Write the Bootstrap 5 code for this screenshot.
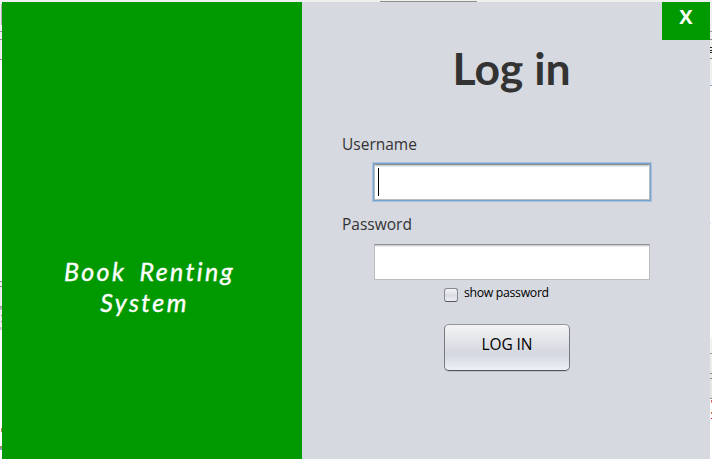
<!DOCTYPE html>
<html lang="en">
<head>
<meta charset="utf-8">
<meta name="viewport" content="width=device-width, initial-scale=1">
<title>Log in</title>
<link href="https://cdn.jsdelivr.net/npm/bootstrap@5.3.0/dist/css/bootstrap.min.css" rel="stylesheet">
<style>
  body { font-family: "Open Sans", "Noto Sans", sans-serif; color: #333; background: #fff; }
  /* window behind the dialog, visible only along its edges */
  .backdrop-window {
    height: 459px; padding: 2px 2px 0;
    background:
      linear-gradient(#8f918a, #8f918a) 380px 1px / 97px 1px,
      linear-gradient(#f0f0f0, #f0f0f0) 0 0 / 712px 2px,
      linear-gradient(#b4b4b4, #b4b4b4) 1px 4px / 1px 21px,
      linear-gradient(#999, #999) 0 31px / 2px 1px,
      linear-gradient(#888, #888) 0 39px / 2px 1px,
      linear-gradient(#888, #888) 0 59px / 2px 1px,
      linear-gradient(#eee, #eee) 0 2px / 2px 58px,
      linear-gradient(#888, #888) 0 281px / 2px 1px,
      linear-gradient(#888, #888) 0 286px / 2px 1px,
      linear-gradient(#999, #ccc) 0 306px / 2px 4px,
      linear-gradient(#787, #787) 1px 315px / 1px 1px,
      linear-gradient(#787, #787) 1px 321px / 1px 1px,
      linear-gradient(#ccc, #ccc) 0 327px / 2px 3px,
      linear-gradient(#eee, #eee) 0 281px / 2px 49px,
      linear-gradient(#a98445, #a98445) 1px 428px / 1px 4px,
      linear-gradient(#a98445, #7aaee0) 0 446px / 2px 4px,
      linear-gradient(#999, #999) 710px 31px / 2px 1px,
      linear-gradient(#888, #888) 710px 39px / 2px 1px,
      linear-gradient(#222, #222) 710px 47px / 2px 1px,
      linear-gradient(#222, #222) 710px 50px / 2px 1px,
      linear-gradient(#222, #222) 710px 52px / 2px 1px,
      linear-gradient(#888, #888) 710px 58px / 2px 1px,
      linear-gradient(#8aa4bd, #8aa4bd) 710px 85px / 2px 1px,
      linear-gradient(#f0f0f0, #f0f0f0) 710px 2px / 2px 83px,
      linear-gradient(#dde6fa, #dde6fa) 710px 222px / 1px 2px,
      linear-gradient(#999, #999) 710px 353px / 2px 1px,
      linear-gradient(#888, #888) 710px 373px / 2px 1px,
      linear-gradient(#888, #888) 710px 378px / 2px 1px,
      linear-gradient(#888, #888) 710px 398px / 2px 1px,
      linear-gradient(#f4f4f4, #e2e2e2) 710px 337px / 2px 62px,
      linear-gradient(#d34b5b, #e99) 711px 400px / 1px 3px,
      linear-gradient(#c96a3a, #c96a3a) 711px 412px / 1px 2px,
      linear-gradient(#c22, #c22) 711px 418px / 2px 1px,
      #fff;
    background-repeat: no-repeat;
  }
  .brand-pane { width: 300px; background: #009900; color: #fff; padding-top: 254px; }
  .brand-name { font: italic 400 25px/31px "Segoe Script", "Bradley Hand", "Lato", cursive; letter-spacing: 2.4px; word-spacing: 5px; -webkit-text-stroke: .4px #fff; }
  .brand-line { display: block; padding-right: 5px; }
  .brand-line + .brand-line { padding-right: 15px; }
  .form-pane { background: #d6d9e0; }
  .close-btn { width: 48px; height: 38px; padding: 0 0 8px; background: #009900; color: #fff; font: 700 20px/30px "Open Sans", sans-serif; }
  .title { font: 700 44.5px/54px "Lato", sans-serif; color: #333; height: 55px; padding: 1px 0 0 11px; }
  .field-label { font-size: 15.5px; line-height: 22px; height: 22px; margin: 38px 0 10px 40px; }
  .field-label.second { margin: 13px 0 9px 40px; }
  .field-box { width: 276px; height: 36px; margin-left: 72px; background: #fff; border: 1px solid #bcbdbf; border-top-color: #8d8e90; box-shadow: inset 0 1px #cfd0d2, inset 0 2px #ececee; }
  .field-box.focused { outline: 1px solid #73a4d1; box-shadow: inset 0 1px #cfd0d2, inset 0 2px #ececee, 0 0 0 2px #a9c1dc; }
  .field-label:first-of-type { margin-bottom: 9px; }
  .caret { width: 1px; height: 28px; background: #000; margin: 3px 0 0 3px; }
  .tick-box { width: 14px; height: 14px; margin-top: 3px; border: 1px solid #85888e; border-bottom-color: #555960; border-radius: 3px; background: linear-gradient(#f5f5f6, #d9dce2 55%, #eef0f5); }
  .show-row { margin: 5px 0 19px 142px; height: 20px; color: #000; }
  .show-text { font-size: 12.3px; line-height: 16px; letter-spacing: -.33px; padding-left: 6px; }
  .login-btn { width: 126px; height: 47px; margin-left: 142px; padding: 0 0 7px; border: 1px solid #8b8e95; border-color: #96989e #777a81 #50545c; border-radius: 5px; background: linear-gradient(#f4f4f5, #d5d8df 62%, #d7dae2 70%, #eff1f8); box-shadow: 0 1px #c0c3ca; color: #000; font-size: 15.5px; line-height: 38px; letter-spacing: -.1px; }
</style>
</head>
<body class="overflow-hidden">
<div class="backdrop-window d-flex">
  <aside class="brand-pane flex-shrink-0 text-center">
    <div class="brand-name"><span class="brand-line">Book Renting</span><span class="brand-line">System</span></div>
  </aside>
  <main class="form-pane flex-grow-1 d-flex flex-column">
    <button type="button" class="close-btn border-0 align-self-end" aria-label="Close">X</button>
    <h1 class="title text-center mb-0">Log in</h1>
    <div class="field-label">Username</div>
    <div class="field-box focused d-flex"><div class="caret"></div></div>
    <div class="field-label second">Password</div>
    <div class="field-box"></div>
    <div class="show-row d-flex">
      <span class="tick-box"></span><span class="show-text">show password</span>
    </div>
    <button type="button" class="login-btn text-center">LOG IN</button>
  </main>
</div>
<script src="https://cdn.jsdelivr.net/npm/bootstrap@5.3.0/dist/js/bootstrap.bundle.min.js"></script>
</body>
</html>
